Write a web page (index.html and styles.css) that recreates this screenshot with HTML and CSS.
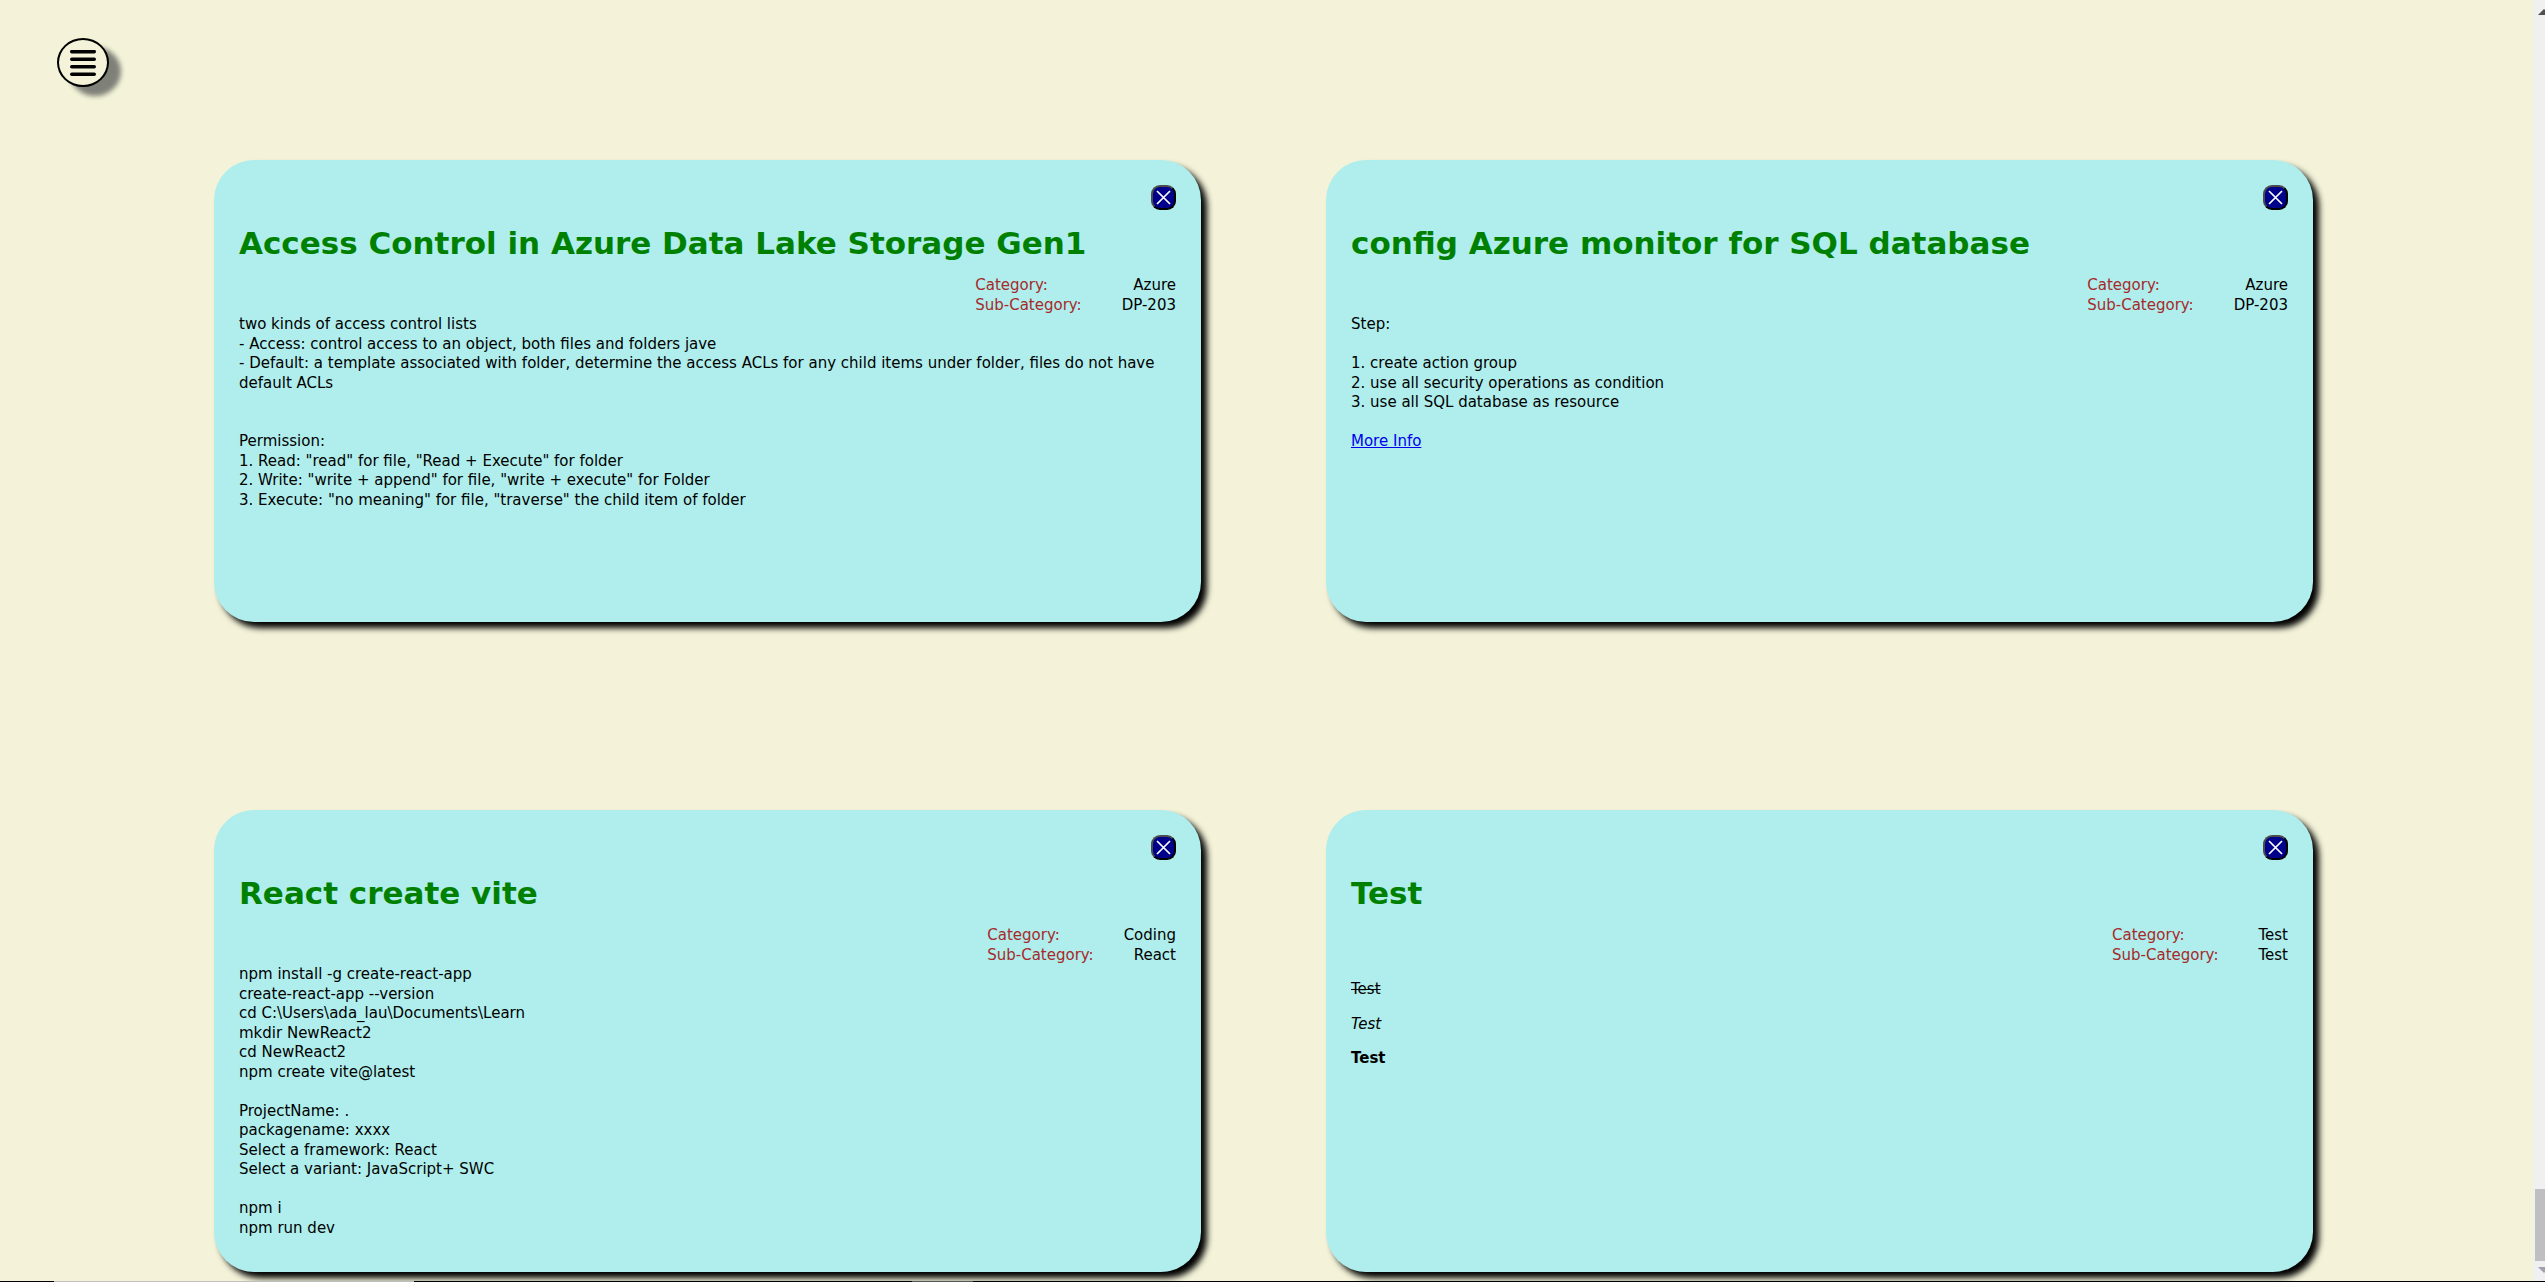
FILE: index.html
```html
<!DOCTYPE html>
<html lang="en">
<head>
  <meta charset="utf-8">
  <title>Notes</title>
  <link rel="stylesheet" href="styles.css">
</head>
<body>
  <div class="viewport">
    <main class="page">
      <header class="topbar">
        <button class="menu" type="button" aria-label="Menu">
          <svg class="menu-icon" viewBox="0 0 26 26" aria-hidden="true">
            <path d="M1.8 1.7H24.2M1.8 9.2H24.2M1.8 16.7H24.2M1.8 24.2H24.2"/>
          </svg>
        </button>
      </header>

      <section class="notes">
        <article class="card">
          <button class="close" type="button" aria-label="Delete note"><svg class="close-icon" viewBox="0 0 15 15" aria-hidden="true"><path d="M1 1L14 14M14 1L1 14"/></svg></button>
          <h1 class="title">Access Control in Azure Data Lake Storage Gen1</h1>
          <dl class="meta">
            <div class="meta-row"><dt>Category:</dt><dd>Azure</dd></div>
            <div class="meta-row"><dt>Sub-Category:</dt><dd>DP-203</dd></div>
          </dl>
          <div class="content">two kinds of access control lists<br>
            - Access: control access to an object, both files and folders jave<br>
            - Default: a template associated with folder, determine the access ACLs for any child items under folder, files do not have default ACLs<br>
            <br>
            <br>
            Permission:<br>
            1. Read: "read" for file, "Read + Execute" for folder<br>
            2. Write: "write + append" for file, "write + execute" for Folder<br>
            3. Execute: "no meaning" for file, "traverse" the child item of folder</div>
        </article>

        <article class="card">
          <button class="close" type="button" aria-label="Delete note"><svg class="close-icon" viewBox="0 0 15 15" aria-hidden="true"><path d="M1 1L14 14M14 1L1 14"/></svg></button>
          <h1 class="title">config Azure monitor for SQL database</h1>
          <dl class="meta">
            <div class="meta-row"><dt>Category:</dt><dd>Azure</dd></div>
            <div class="meta-row"><dt>Sub-Category:</dt><dd>DP-203</dd></div>
          </dl>
          <div class="content">Step:<br>
            <br>
            1. create action group<br>
            2. use all security operations as condition<br>
            3. use all SQL database as resource<br>
            <br>
            <a href="#more">More Info</a></div>
        </article>

        <article class="card">
          <button class="close" type="button" aria-label="Delete note"><svg class="close-icon" viewBox="0 0 15 15" aria-hidden="true"><path d="M1 1L14 14M14 1L1 14"/></svg></button>
          <h1 class="title">React create vite</h1>
          <dl class="meta">
            <div class="meta-row"><dt>Category:</dt><dd>Coding</dd></div>
            <div class="meta-row"><dt>Sub-Category:</dt><dd>React</dd></div>
          </dl>
          <div class="content">npm install -g create-react-app<br>
            create-react-app --version<br>
            cd C:\Users\ada_lau\Documents\Learn<br>
            mkdir NewReact2<br>
            cd NewReact2<br>
            npm create vite@latest<br>
            <br>
            ProjectName: .<br>
            packagename: xxxx<br>
            Select a framework: React<br>
            Select a variant: JavaScript+ SWC<br>
            <br>
            npm i<br>
            npm run dev</div>
        </article>

        <article class="card">
          <button class="close" type="button" aria-label="Delete note"><svg class="close-icon" viewBox="0 0 15 15" aria-hidden="true"><path d="M1 1L14 14M14 1L1 14"/></svg></button>
          <h1 class="title">Test</h1>
          <dl class="meta">
            <div class="meta-row"><dt>Category:</dt><dd>Test</dd></div>
            <div class="meta-row"><dt>Sub-Category:</dt><dd>Test</dd></div>
          </dl>
          <div class="content">
            <p><s>Test</s></p>
            <p><em>Test</em></p>
            <p><strong>Test</strong></p>
          </div>
        </article>
      </section>
    </main>

    <div class="scrollbar" aria-hidden="true">
      <svg class="arrow" viewBox="0 0 12 6"><path d="M0 6L6 0L12 6Z" fill="#505050"/></svg>
      <div class="thumb"></div>
      <svg class="arrow" viewBox="0 0 12 6"><path d="M0 0H12L6 6Z" fill="#a39fae"/></svg>
    </div>
  </div>
  <div class="edge" aria-hidden="true"><span class="edge-search"></span><span class="edge-task"></span></div>
</body>
</html>
```

FILE: styles.css
```css
* {
  box-sizing: border-box;
}

body {
  margin: 0;
  height: 100vh;
  display: flex;
  flex-direction: column;
  overflow: hidden;
  background: #f4f3d9;
  color: #000;
  font-family: "DejaVu Sans", Verdana, sans-serif;
  font-size: 15px;
  line-height: 1.3;
}

.viewport {
  flex: 1;
  min-height: 0;
  display: flex;
}

.page {
  flex: 1;
  min-width: 0;
  overflow: hidden;
}

.topbar {
  height: 160px;
  padding: 38px 57px;
}

.menu {
  display: flex;
  align-items: center;
  justify-content: center;
  width: 52px;
  height: 49px;
  padding: 0;
  border: 2px solid #000;
  border-radius: 50%;
  background: #f4f3d9;
  box-shadow: 12px 9px 5px #7f8078;
}

.menu-icon {
  width: 26px;
  height: 26px;
  fill: none;
  stroke: #000;
  stroke-width: 3.6;
  stroke-linecap: round;
}

.notes {
  display: grid;
  grid-template-columns: 1fr 1fr;
  gap: 188px 125px;
  padding: 0 220px 0 214px;
}

.card {
  display: flex;
  flex-direction: column;
  min-height: 462px;
  padding: 25px;
  border-radius: 40px;
  background: #afeeec;
  box-shadow: 6px 6px 6px #000;
}

.close {
  align-self: flex-end;
  display: flex;
  align-items: center;
  justify-content: center;
  width: 25px;
  height: 25px;
  padding: 0;
  border: 2px solid;
  border-color: #4c4c4c #000 #000 #4c4c4c;
  border-radius: 9px;
  background: #00008b;
}

.close-icon {
  width: 15px;
  height: 15px;
  fill: none;
  stroke: #fff;
  stroke-width: 1.7;
}

.title {
  margin: 13px 0;
  color: #008000;
  font-size: 31px;
  line-height: 40px;
}

.meta {
  align-self: flex-end;
  margin: 0;
}

.meta-row {
  display: flex;
  justify-content: space-between;
  gap: 40px;
}

.meta dt {
  color: #a52a2a;
}

.meta dd {
  margin: 0;
}

.content p {
  margin: 15px 0;
}

.content a {
  color: #0000ee;
}

.scrollbar {
  display: flex;
  flex-direction: column;
  width: 12px;
  padding: 9px 0 8px 2px;
  overflow: hidden;
  background: #f0f0f0;
}

.arrow {
  flex: none;
  width: 12px;
  height: 6px;
  margin-left: 3px;
}

.thumb {
  height: 72px;
  margin: auto 0 6px;
  background: #bfbfc1;
}

.edge {
  display: flex;
  height: 1px;
  padding-left: 54px;
  background: #000;
}

.edge-search {
  width: 360px;
  background: #c0c0c0;
}

.edge-task {
  width: 61px;
  margin-left: 498px;
  background: #555;
}
```
